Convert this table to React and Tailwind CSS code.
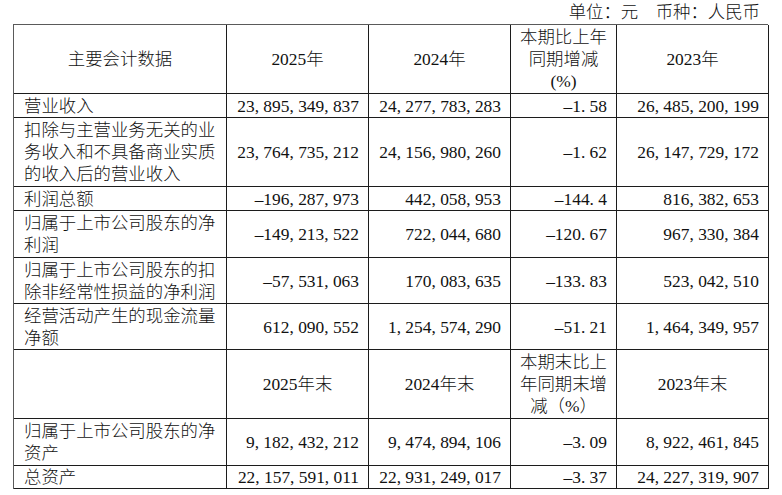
import React from "react";

const FONT = { fontFamily: '"Liberation Serif", "Noto Sans CJK SC", serif' };

const header1 = [
  { t: ["主要会计数据"], c: true },
  { t: ["2025年"], c: true },
  { t: ["2024年"], c: true },
  { t: ["本期比上年", "同期增减", "(%)"], c: true },
  { t: ["2023年"], c: true },
];

const header2 = [
  { t: [""], c: true },
  { t: ["2025年末"], c: true },
  { t: ["2024年末"], c: true },
  { t: ["本期末比上", "年同期末增", "减（%）"], c: true },
  { t: ["2023年末"], c: true },
];

const rows1 = [
  [["营业收入"], "23, 895, 349, 837", "24, 277, 783, 283", "–1. 58", "26, 485, 200, 199"],
  [
    ["扣除与主营业务无关的业", "务收入和不具备商业实质", "的收入后的营业收入"],
    "23, 764, 735, 212",
    "24, 156, 980, 260",
    "–1. 62",
    "26, 147, 729, 172",
  ],
  [["利润总额"], "–196, 287, 973", "442, 058, 953", "–144. 4", "816, 382, 653"],
  [["归属于上市公司股东的净", "利润"], "–149, 213, 522", "722, 044, 680", "–120. 67", "967, 330, 384"],
  [
    ["归属于上市公司股东的扣", "除非经常性损益的净利润"],
    "–57, 531, 063",
    "170, 083, 635",
    "–133. 83",
    "523, 042, 510",
  ],
  [
    ["经营活动产生的现金流量", "净额"],
    "612, 090, 552",
    "1, 254, 574, 290",
    "–51. 21",
    "1, 464, 349, 957",
  ],
];

const rows2 = [
  [["归属于上市公司股东的净", "资产"], "9, 182, 432, 212", "9, 474, 894, 106", "–3. 09", "8, 922, 461, 845"],
  [["总资产"], "22, 157, 591, 011", "22, 931, 249, 017", "–3. 37", "24, 227, 319, 907"],
];

function HeaderCell({ lines }) {
  return (
    <div className="flex flex-col items-center justify-center border-r border-b border-[#1c1c1c] text-center leading-[22px]">
      {lines.map((l, i) => (
        <div key={i} className="whitespace-pre">
          {l}
        </div>
      ))}
    </div>
  );
}

function LabelCell({ lines }) {
  return (
    <div className="flex flex-col justify-center border-r border-b border-[#1c1c1c] pl-[10px] leading-[22px]">
      {lines.map((l, i) => (
        <div key={i} className="whitespace-nowrap">
          {l}
        </div>
      ))}
    </div>
  );
}

function NumCell({ v }) {
  return (
    <div className="flex items-center justify-end border-r border-b border-[#1c1c1c] pr-[9px] leading-[22px]">
      <span className="whitespace-pre">{v}</span>
    </div>
  );
}

export default function App() {
  return (
    <div className="w-[782px] h-[495px] bg-white text-[#111] text-[17.4px] font-light" style={FONT}>
      <div className="w-[768px] h-[24px] pr-[8px] text-right leading-[24px] whitespace-pre">
        单位：元　币种：人民币
      </div>
      <div className="ml-[13px] w-[755px] border-t border-l border-t-[#5a5a5a] border-l-[#5a5a5a] grid grid-cols-[213px_142px_142px_106px_152px] grid-rows-[69px_24px_69px_24px_47px_46px_46px_69px_47px_23px]">
        {header1.map((h, i) => (
          <HeaderCell key={"h1" + i} lines={h.t} />
        ))}
        {rows1.map((r, ri) => (
          <React.Fragment key={"r1" + ri}>
            <LabelCell lines={r[0]} />
            <NumCell v={r[1]} />
            <NumCell v={r[2]} />
            <NumCell v={r[3]} />
            <NumCell v={r[4]} />
          </React.Fragment>
        ))}
        {header2.map((h, i) => (
          <HeaderCell key={"h2" + i} lines={h.t} />
        ))}
        {rows2.map((r, ri) => (
          <React.Fragment key={"r2" + ri}>
            <LabelCell lines={r[0]} />
            <NumCell v={r[1]} />
            <NumCell v={r[2]} />
            <NumCell v={r[3]} />
            <NumCell v={r[4]} />
          </React.Fragment>
        ))}
      </div>
    </div>
  );
}
